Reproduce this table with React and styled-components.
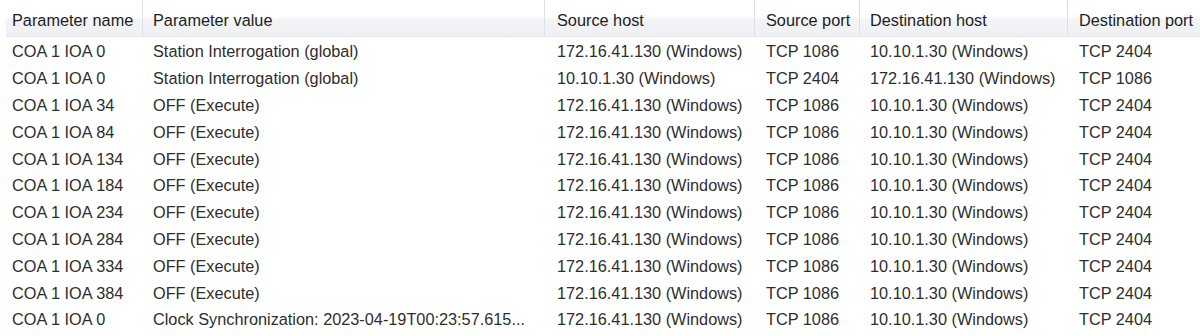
import styled, { createGlobalStyle } from 'styled-components';

const GlobalStyle = createGlobalStyle`
    html, body {
        margin: 0;
        padding: 0;
        background: #FFFFFF;
    }
`

const colunas = [
    { titulo: "Parameter name", largura: 137, recuo: 6 },
    { titulo: "Parameter value", largura: 402, recuo: 10 },
    { titulo: "Source host", largura: 210, recuo: 12 },
    { titulo: "Source port", largura: 105, recuo: 11 },
    { titulo: "Destination host", largura: 208, recuo: 10 },
    { titulo: "Destination port", largura: 132, recuo: 11 },
];

const ida = ["172.16.41.130 (Windows)", "TCP 1086", "10.10.1.30 (Windows)", "TCP 2404"];
const volta = ["10.10.1.30 (Windows)", "TCP 2404", "172.16.41.130 (Windows)", "TCP 1086"];

const linhas = [
    ["COA 1 IOA 0", "Station Interrogation (global)", ...ida],
    ["COA 1 IOA 0", "Station Interrogation (global)", ...volta],
    ["COA 1 IOA 34", "OFF (Execute)", ...ida],
    ["COA 1 IOA 84", "OFF (Execute)", ...ida],
    ["COA 1 IOA 134", "OFF (Execute)", ...ida],
    ["COA 1 IOA 184", "OFF (Execute)", ...ida],
    ["COA 1 IOA 234", "OFF (Execute)", ...ida],
    ["COA 1 IOA 284", "OFF (Execute)", ...ida],
    ["COA 1 IOA 334", "OFF (Execute)", ...ida],
    ["COA 1 IOA 384", "OFF (Execute)", ...ida],
    ["COA 1 IOA 0", "Clock Synchronization: 2023-04-19T00:23:57.615...", ...ida],
];

const gradeColunas = colunas.map(c => `${c.largura}px`).join(" ");

export default function App() {
    return (
        <>
            <GlobalStyle />
            <Lista>
                <Cabecalho>
                    {colunas.map((c, i) =>
                        <Titulo key={i} $recuo={c.recuo}>{c.titulo}</Titulo>
                    )}
                </Cabecalho>
                <Corpo>
                    {linhas.map((linha, i) =>
                        <Linha key={i}>
                            {linha.map((texto, j) =>
                                <Celula key={j} $recuo={colunas[j].recuo}>{texto}</Celula>
                            )}
                        </Linha>
                    )}
                </Corpo>
            </Lista>
        </>
    );
}

const Lista = styled.div`
    width: 1200px;
    height: 336px;
    box-sizing: border-box;
    padding-left: 6px;
    overflow: hidden;
    background: #FFFFFF;
    font-family: "Liberation Sans", Arial, sans-serif;
    font-size: 16.3px;
    color: #2E2E2E;
`

const Cabecalho = styled.div`
    display: grid;
    grid-template-columns: ${gradeColunas};
    height: 37px;
    box-sizing: border-box;
    background: linear-gradient(#FFFFFF 0%, #FFFFFF 45%, #F3F4F6 55%, #EEF0F3 100%);
    border-bottom: 1px solid #E3E6EA;
`

const Titulo = styled.div`
    display: flex;
    align-items: center;
    padding-left: ${p => p.$recuo}px;
    padding-top: 4px;
    border-right: 1px solid #DDE1E6;
    white-space: nowrap;
    overflow: hidden;
    color: #1E1E1E;

    &:last-child {
        border-right: none;
    }
`

const Corpo = styled.div`
    padding-top: 1.5px;
`

const Linha = styled.div`
    display: grid;
    grid-template-columns: ${gradeColunas};
    height: 26.8px;
    align-items: center;
`

const Celula = styled.div`
    padding-left: ${p => p.$recuo}px;
    white-space: nowrap;
    overflow: hidden;
`
